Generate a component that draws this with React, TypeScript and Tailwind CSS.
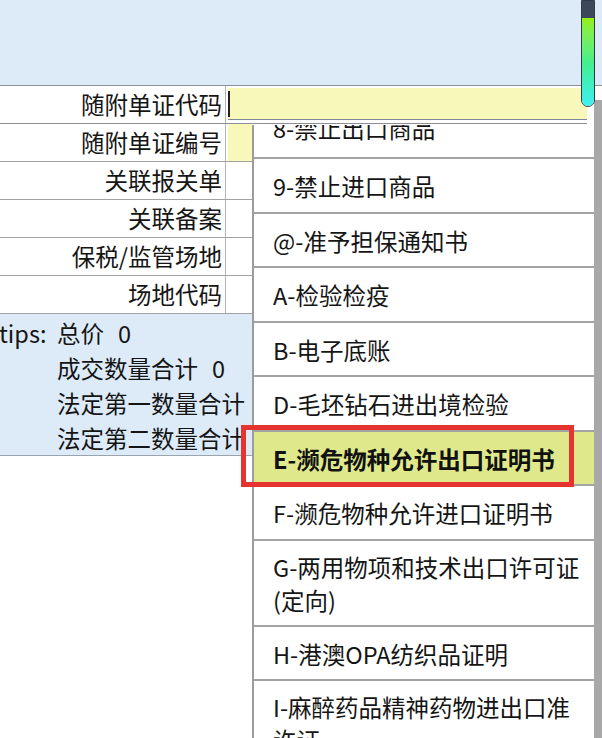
import React from "react";

const rows = ["随附单证编号", "关联报关单", "关联备案", "保税/监管场地", "场地代码"];

const items: { text: string[]; active?: boolean; first?: boolean }[] = [
  { text: ["8-禁止出口商品"], first: true },
  { text: ["9-禁止进口商品"] },
  { text: ["@-准予担保通知书"] },
  { text: ["A-检验检疫"] },
  { text: ["B-电子底账"] },
  { text: ["D-毛坯钻石进出境检验"] },
  { text: ["E-濒危物种允许出口证明书"], active: true },
  { text: ["F-濒危物种允许进口证明书"] },
  { text: ["G-两用物项和技术出口许可证", "(定向)"] },
  { text: ["H-港澳OPA纺织品证明"] },
  { text: ["I-麻醉药品精神药物进出口准", "许证"] },
];

function itemClass(it: { text: string[]; active?: boolean; first?: boolean }) {
  const base = "px-[19px] border-b-2 border-[#a3a3a3] whitespace-nowrap";
  if (it.first) return base + " pt-[7px] pb-[13px] leading-[32.5px]";
  if (it.text.length > 1) return base + " pt-[10px] pb-[8px] leading-[33px]";
  if (it.active) return base + " pt-[11px] pb-[9px] leading-[32.5px] bg-[#dfe98c] font-bold text-[#111]";
  return base + " pt-[11px] pb-[9px] leading-[32.5px]";
}

export default function App() {
  return (
    <div className="relative w-[602px] h-[738px] overflow-hidden bg-white text-[23.5px] text-[#151515] font-['Noto_Sans_CJK_SC','Noto_Sans',sans-serif]">
      {/* header band */}
      <div className="h-[86px] bg-[#ddebf9] border-b border-[#8c9096]" />

      {/* form rows */}
      <div className="flex h-[38px] w-[587px] border-b border-[#8c9096]">
        <div className="w-[226px] flex items-center justify-end pr-[3px] border-r border-[#b5b5b5]">随附单证代码</div>
        <div className="flex-1 pl-[2px] pt-[2px] pb-[3px]">
          <div className="h-full bg-[#f8f8ba] border-b border-[#7d8898] flex items-center">
            <div className="w-[2px] h-[26px] bg-[#222]" />
          </div>
        </div>
      </div>
      {rows.map((label, i) => (
        <div key={label} className="flex h-[38px] w-[252px] border-b border-[#a2a2a2]">
          <div className="w-[226px] flex items-center justify-end pr-[3px] border-r border-[#b5b5b5]">{label}</div>
          <div className="flex-1 pl-[2px]">
            {i === 0 && <div className="h-full bg-[#f8f8ba]" />}
          </div>
        </div>
      ))}

      {/* tips */}
      <div className="w-[252px] h-[142px] bg-[#ddebf9] border-b border-[#9aa4ae] flex pt-[2px] leading-[35px]">
        <div className="w-[58px] shrink-0 -ml-[1px]">tips:</div>
        <div className="flex flex-col whitespace-nowrap">
          <div>总价<span className="ml-[14px]">0</span></div>
          <div>成交数量合计<span className="ml-[14px]">0</span></div>
          <div>法定第一数量合计</div>
          <div>法定第二数量合计</div>
        </div>
      </div>

      {/* dropdown list */}
      <div className="absolute left-[252px] top-[125px] w-[342px] bottom-0 overflow-hidden bg-white border-l-2 border-[#9c9c9c]">
        <div className="-mt-[20.5px]">
          {items.map((it) => (
            <div key={it.text[0]} className={itemClass(it)}>
              {it.text.map((t) => (
                <div key={t}>{t}</div>
              ))}
            </div>
          ))}
        </div>
      </div>

      {/* right edge strip */}
      <div className="absolute right-0 top-[100px] bottom-0 w-[8px] bg-[#a8a8a8]" />

      {/* scroll thumb */}
      <div className="absolute left-[581px] top-0 w-[14px] h-[107px] rounded-b-full border border-[#2f3a48] overflow-hidden flex flex-col">
        <div className="h-[17px] bg-[#3c475a]" />
        <div className="flex-1 bg-gradient-to-b from-[#93f000] via-[#45ee8a] to-[#3ff0f2]" />
      </div>

      {/* red annotation box */}
      <div className="absolute left-[241px] top-[425px] w-[333px] h-[62px] border-[5px] border-[#e5332f]" />
    </div>
  );
}
